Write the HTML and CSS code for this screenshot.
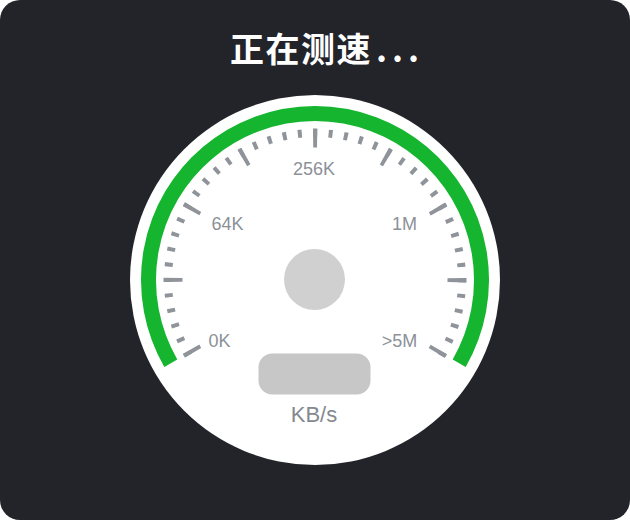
FILE: index.html
```html
<!DOCTYPE html>
<html lang="zh">
<head>
<meta charset="utf-8">
<title>正在测速</title>
<link rel="stylesheet" href="styles.css">
</head>
<body>
<div class="card">
  <h1 class="title">正在测速<span class="dots">...</span></h1>
  <svg class="gauge" width="370" height="370" viewBox="130 95 370 370" xmlns="http://www.w3.org/2000/svg">
    <circle class="face" cx="315" cy="280" r="185"/>
    <path class="arc" d="M 170.81 363.25 A 166.5 166.5 0 1 1 459.19 363.25"/>
    <path class="ticks-minor" d="M 191.72 360.06 A 147 147 0 1 1 438.28 360.06"/>
    <path class="ticks-major" d="M 214.59 380.41 A 142 142 0 1 1 415.41 380.41"/>
    <text class="scale" x="219.5" y="347">0K</text>
    <text class="scale" x="227.5" y="229.5">64K</text>
    <text class="scale" x="314" y="175">256K</text>
    <text class="scale" x="404.5" y="229.5">1M</text>
    <text class="scale" x="399.5" y="346.5">&gt;5M</text>
    <circle class="hub" cx="314.5" cy="279.5" r="30.5"/>
    <rect class="value" x="258.5" y="353.5" width="112" height="41" rx="14" ry="14"/>
    <text class="unit" x="314" y="421.5">KB/s</text>
  </svg>
</div>
</body>
</html>
```

FILE: styles.css
```css
html, body {
  margin: 0;
  padding: 0;
  background: #ffffff;
}

.card {
  width: 630px;
  height: 520px;
  border-radius: 20px;
  background: #232429;
  display: flex;
  flex-direction: column;
  align-items: center;
  overflow: hidden;
}

.title {
  margin: 25px 0 0 0;
  font-family: "Noto Sans CJK SC", "Noto Sans", sans-serif;
  font-size: 34px;
  font-weight: 700;
  line-height: 45px;
  color: #ffffff;
  letter-spacing: 1.5px;
  padding-left: 24px;
}

.dots {
  letter-spacing: 5px;
  margin-left: 4px;
}

.gauge {
  display: block;
  margin-top: 25px;
}

.face {
  fill: #ffffff;
}

.arc {
  fill: none;
  stroke: #15b52f;
  stroke-width: 15;
  stroke-linecap: butt;
}

.ticks-minor {
  fill: none;
  stroke: #8f949a;
  stroke-width: 8;
  stroke-dasharray: 4 11.3938;
  stroke-dashoffset: 9.6969;
}

.ticks-major {
  fill: none;
  stroke: #8f949a;
  stroke-width: 19;
  stroke-dasharray: 4 70.351;
  stroke-dashoffset: 39.1755;
}

.scale {
  font-family: "Liberation Sans", Arial, sans-serif;
  font-size: 18px;
  fill: #8c9198;
  text-anchor: middle;
}

.hub {
  fill: #d0d0d0;
}

.value {
  fill: #c7c7c7;
}

.unit {
  font-family: "Liberation Sans", Arial, sans-serif;
  font-size: 22px;
  fill: #848990;
  text-anchor: middle;
}
```
